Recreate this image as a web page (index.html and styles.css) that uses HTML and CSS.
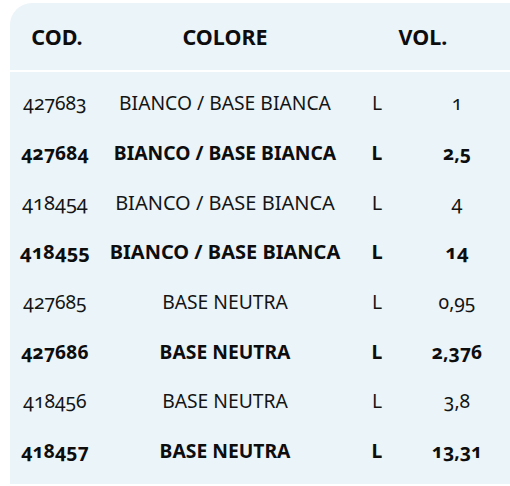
FILE: index.html
```html
<!DOCTYPE html>
<html lang="it">
<head>
<meta charset="utf-8">
<link rel="stylesheet" href="styles.css">
</head>
<body>
<div class="panel">
  <div class="head">
    <div class="c-code">COD.</div>
    <div class="c-col">COLORE</div>
    <div class="c-volh">VOL.</div>
  </div>
  <div class="body">
    <div class="row"><div class="c-code">427683</div><div class="c-col">BIANCO / BASE BIANCA</div><div class="c-l">L</div><div class="c-vol">1</div></div>
    <div class="row b"><div class="c-code">427684</div><div class="c-col">BIANCO / BASE BIANCA</div><div class="c-l">L</div><div class="c-vol">2,5</div></div>
    <div class="row big"><div class="c-code">418454</div><div class="c-col">BIANCO / BASE BIANCA</div><div class="c-l">L</div><div class="c-vol">4</div></div>
    <div class="row b big"><div class="c-code">418455</div><div class="c-col">BIANCO / BASE BIANCA</div><div class="c-l">L</div><div class="c-vol">14</div></div>
    <div class="row"><div class="c-code">427685</div><div class="c-col">BASE NEUTRA</div><div class="c-l">L</div><div class="c-vol">0,95</div></div>
    <div class="row b"><div class="c-code">427686</div><div class="c-col">BASE NEUTRA</div><div class="c-l">L</div><div class="c-vol">2,376</div></div>
    <div class="row"><div class="c-code">418456</div><div class="c-col">BASE NEUTRA</div><div class="c-l">L</div><div class="c-vol">3,8</div></div>
    <div class="row b"><div class="c-code">418457</div><div class="c-col">BASE NEUTRA</div><div class="c-l">L</div><div class="c-vol">13,31</div></div>
  </div>
</div>
</body>
</html>
```
FILE: styles.css
```css
html, body {
  margin: 0;
  padding: 0;
  background: #ffffff;
}
body {
  font-family: "Noto Sans", "Open Sans", sans-serif;
  color: #141414;
  font-variant-numeric: oldstyle-nums;
}
.panel {
  margin: 3px 0 0 10px;
  background: #ebf4f9;
  border-top-left-radius: 22px;
  height: 481px;
}
.head, .row {
  display: grid;
  grid-template-columns: 90px 250px 54px 106px;
  align-items: center;
}
.head {
  height: 67px;
  border-bottom: 2px solid #ffffff;
  font-weight: 700;
  font-size: 21.5px;
  color: #0d0d0d;
}
.head .c-code {
  padding-left: 4px;
}
.head .c-volh {
  grid-column: 3 / 5;
  text-align: center;
  padding-right: 14px;
}
.body {
  padding-top: 6px;
}
.row {
  height: 49.7px;
  font-size: 19.3px;
}
.row.big {
  font-size: 20px;
}
.row.b {
  font-weight: 700;
  color: #0d0d0d;
}
.c-code, .c-col, .c-l, .c-vol {
  text-align: center;
}
```
